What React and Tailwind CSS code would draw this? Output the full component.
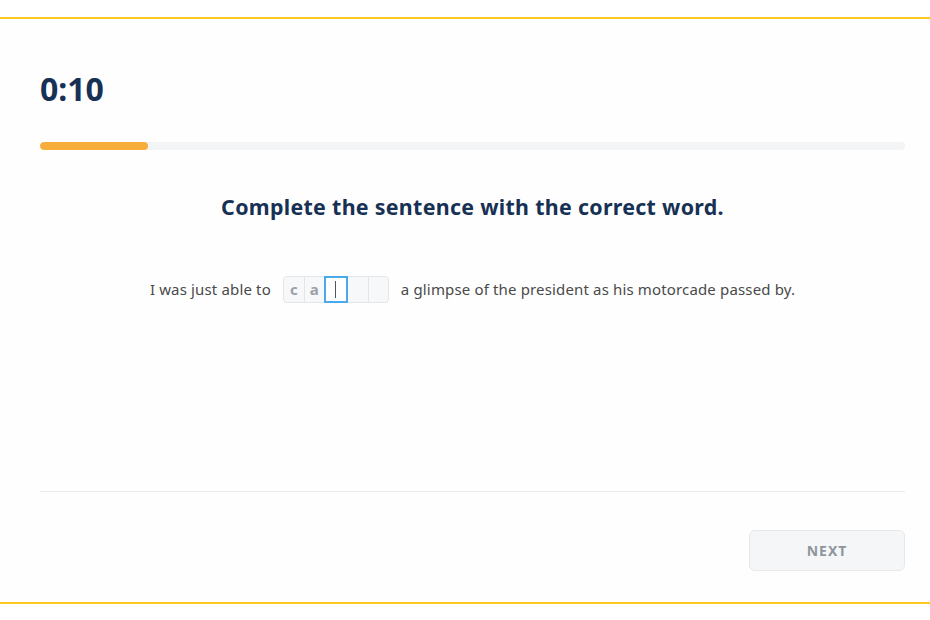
import React from "react";

const FONT = { fontFamily: '"Noto Sans", "Open Sans", sans-serif' };

function LetterBoxes() {
  const letters = ["c", "a", "", "", ""];
  return (
    <div className="flex h-[27px] rounded-[4px] border border-[#e3e5e8] bg-[#f7f8f9] mx-3">
      {letters.map((l, i) => {
        if (i === 2) {
          return (
            <div
              key={i}
              className="w-[24px] -my-px border-2 border-[#4aa8ec] bg-white flex items-center justify-center"
            >
              <div className="w-px h-[17px] bg-[#555]" />
            </div>
          );
        }
        return (
          <div
            key={i}
            className={
              "w-[20px] flex items-center justify-center text-[15px] font-bold text-[#9aa0a6] " +
              (i === 0 || i === 3 ? "" : "border-l border-[#e3e5e8]")
            }
          >
            {l}
          </div>
        );
      })}
    </div>
  );
}

export default function App() {
  return (
    <div className="w-[930px] h-[620px] bg-white" style={FONT}>
      <div className="h-[17px]" />
      <div className="h-[2px] bg-[#fdcb1f]" />
      <div className="h-[583px] bg-[#fefefe] pl-10 pr-[25px] flex flex-col">
        <div className="pt-[50px] text-[32px] font-bold text-[#173155] leading-[40px]">
          0:10
        </div>
        <div className="mt-[33px] h-2 rounded-full bg-[#f3f4f5] overflow-hidden">
          <div className="h-2 w-[108px] rounded-full bg-[#f7ad3c]" />
        </div>
        <h1 className="mt-[41px] text-center text-[21.4px] font-bold text-[#173155] leading-[32px] tracking-[0.3px]">
          Complete the sentence with the correct word.
        </h1>
        <div className="mt-[53px] flex items-center justify-center text-[15px] tracking-[0.15px] text-[#4a4a4a]">
          <span>I was just able to</span>
          <LetterBoxes />
          <span>a glimpse of the president as his motorcade passed by.</span>
        </div>
        <div className="flex-1" />
        <div className="h-px bg-[#ebebeb]" />
        <div className="flex justify-end pt-[38px] pb-[31px]">
          <button className="w-[156px] h-[41px] rounded-[6px] border border-[#e6e8ea] bg-[#f5f6f7] text-[14px] font-bold tracking-[1px] text-[#8e959c]">
            NEXT
          </button>
        </div>
      </div>
      <div className="h-[2px] bg-[#fdcb1f]" />
    </div>
  );
}
